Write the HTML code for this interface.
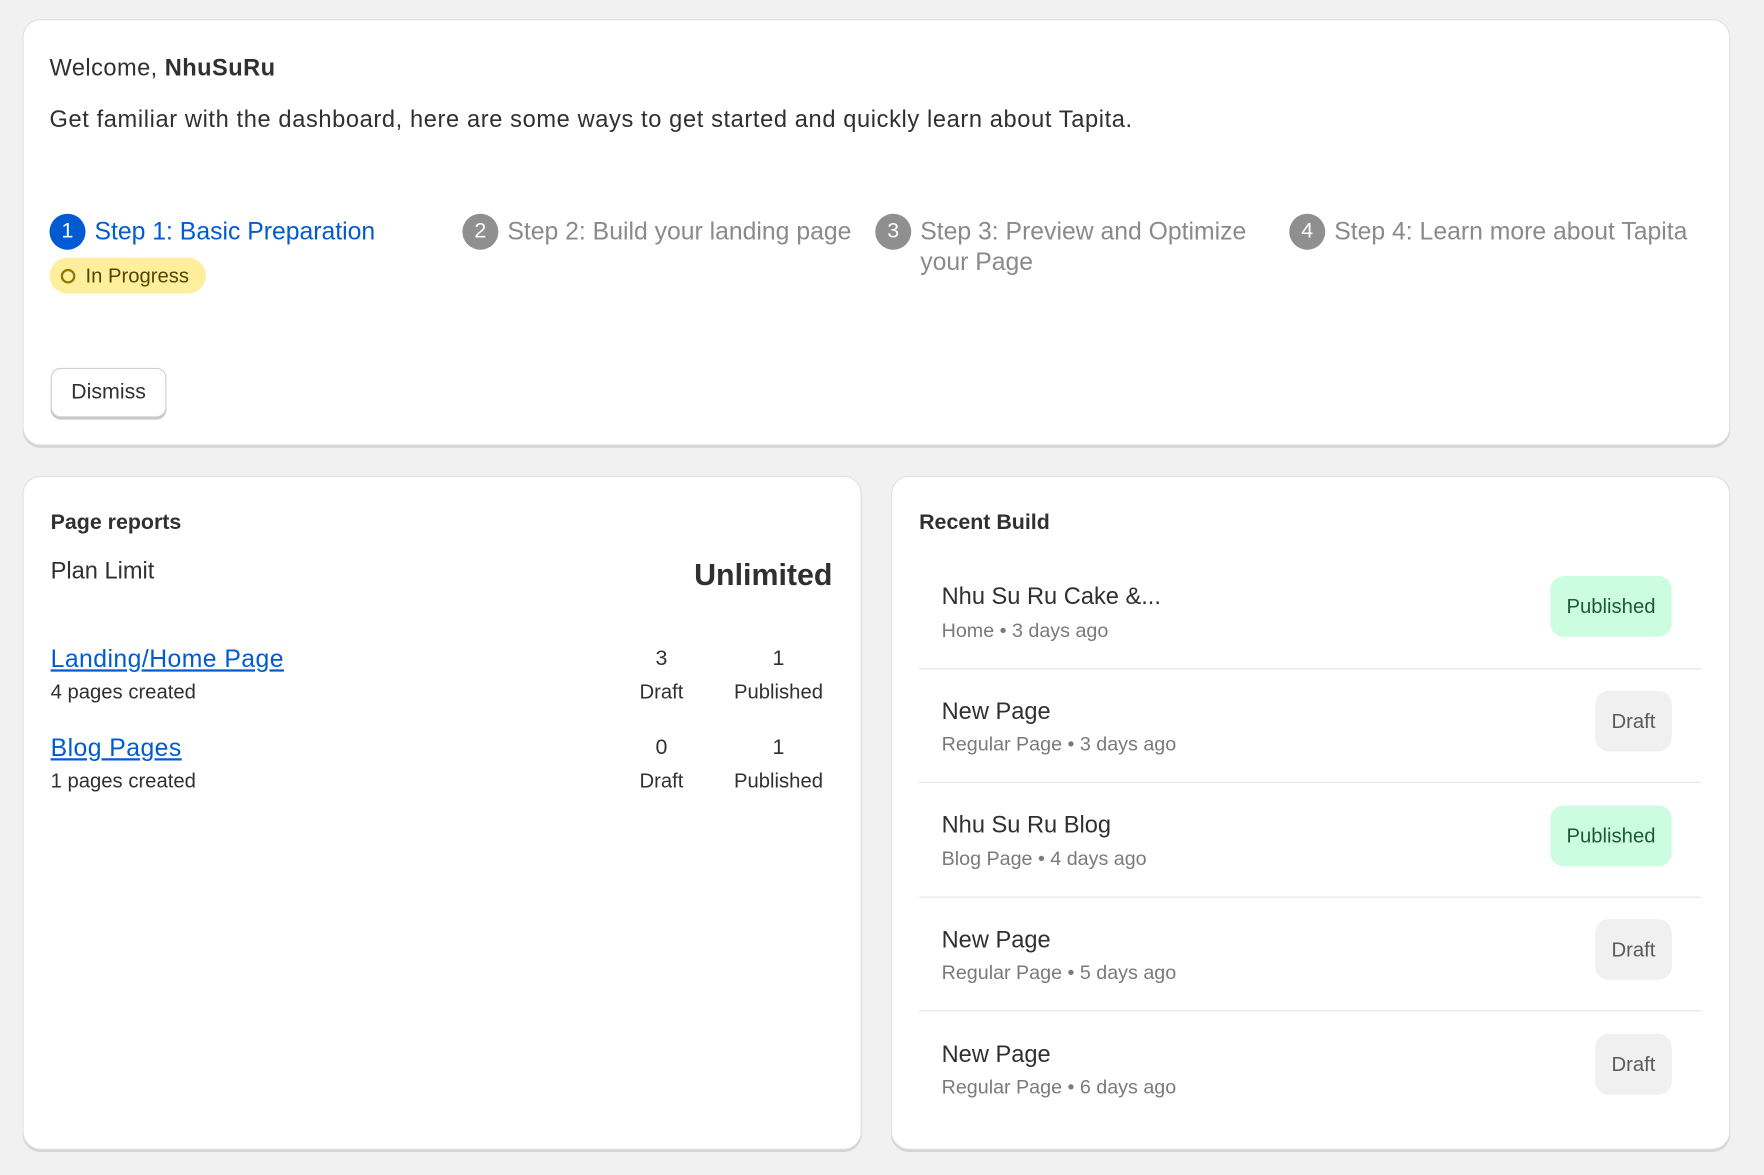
<!DOCTYPE html>
<html><head><meta charset="utf-8"><style>
html,body{margin:0;padding:0;background:#f1f1f1;width:1764px;height:1175px;overflow:hidden}
#w{position:absolute;left:0;top:0;width:1568px;height:1044px;transform:scale(1.125);transform-origin:0 0;font-family:"Liberation Sans",sans-serif;color:#303030}
.card{position:absolute;background:#fff;border:1px solid #e1e1e1;border-radius:16px;box-shadow:0 2px 0 #d4d4d4}
.a{position:absolute;white-space:nowrap;line-height:1}
.c{position:absolute;width:32px;height:32px;border-radius:50%;color:#fff;font-size:19px;text-align:center;line-height:32px}
.st{font-size:22px;color:#8a8a8a}
.sep{position:absolute;left:817px;width:695px;height:1px;background:#e3e3e3}
.t{font-size:21px;color:#303030}
.s{font-size:17.5px;color:#7a7a7a}
.pub{position:absolute;left:1378px;width:108px;height:54px;background:#cdfde0;border-radius:12px;color:#1c5a35;font-size:18px;text-align:center;line-height:54px}
.dr{position:absolute;left:1418px;width:68px;height:54px;background:#f0f0f0;border-radius:12px;color:#5a5a5a;font-size:18px;text-align:center;line-height:54px}
.n{position:absolute;width:100px;text-align:center;font-size:19px;line-height:1}
.lk{color:#005bd3;text-decoration:underline;font-size:22px;letter-spacing:0.4px}
</style></head><body><div id="w">
<div class="card" style="left:20px;top:17px;width:1516px;height:377px"></div>
<div class="a" style="left:44px;top:50px;font-size:21px;letter-spacing:0.4px">Welcome, <b>NhuSuRu</b></div>
<div class="a" style="left:44px;top:96px;font-size:21px;letter-spacing:0.55px">Get familiar with the dashboard, here are some ways to get started and quickly learn about Tapita.</div>
<div class="c" style="left:44px;top:190px;background:#005bd3">1</div>
<div class="a st" style="left:84px;top:195px;color:#005bd3">Step 1: Basic Preparation</div>
<div class="c" style="left:411px;top:190px;background:#8f8f8f">2</div>
<div class="a st" style="left:451px;top:195px">Step 2: Build your landing page</div>
<div class="c" style="left:778px;top:190px;background:#8f8f8f">3</div>
<div class="a st" style="left:818px;line-height:27px;top:192px">Step 3: Preview and Optimize<br>your Page</div>
<div class="c" style="left:1146px;top:190px;background:#8f8f8f">4</div>
<div class="a st" style="left:1186px;top:195px">Step 4: Learn more about Tapita</div>
<div style="position:absolute;left:44px;top:229px;width:139px;height:32px;background:#ffef9d;border-radius:16px"></div>
<div style="position:absolute;left:54px;top:239px;width:9px;height:9px;border:2px solid #8a7a00;border-radius:50%"></div>
<div class="a" style="left:76px;top:236px;font-size:18px;color:#4f4700">In Progress</div>
<div style="position:absolute;left:45px;top:327px;width:101px;height:42px;border:1px solid #cfcfcf;border-radius:9px;box-shadow:0 2px 0 #c8c8c8;background:#fff;font-size:19px;text-align:center;line-height:42px;color:#303030">Dismiss</div>

<div class="card" style="left:20px;top:423px;width:744px;height:597px"></div>
<div class="a" style="left:45px;top:455px;font-size:19px;font-weight:bold">Page reports</div>
<div class="a" style="left:45px;top:497px;font-size:21px">Plan Limit</div>
<div class="a" style="right:828px;top:498px;font-size:27px;font-weight:bold;color:#303030">Unlimited</div>
<div class="a lk" style="left:45px;top:575px">Landing/Home Page</div>
<div class="a" style="left:45px;top:606px;font-size:18px">4 pages created</div>
<div class="n" style="left:538px;top:576px">3</div><div class="n" style="left:538px;top:606px;font-size:18px">Draft</div>
<div class="n" style="left:642px;top:576px">1</div><div class="n" style="left:642px;top:606px;font-size:18px">Published</div>
<div class="a lk" style="left:45px;top:654px">Blog Pages</div>
<div class="a" style="left:45px;top:685px;font-size:18px">1 pages created</div>
<div class="n" style="left:538px;top:655px">0</div><div class="n" style="left:538px;top:685px;font-size:18px">Draft</div>
<div class="n" style="left:642px;top:655px">1</div><div class="n" style="left:642px;top:685px;font-size:18px">Published</div>

<div class="card" style="left:792px;top:423px;width:744px;height:597px"></div>
<div class="a" style="left:817px;top:455px;font-size:19px;font-weight:bold">Recent Build</div>

<div class="a t" style="left:837px;top:520px">Nhu Su Ru Cake &amp;...</div>
<div class="a s" style="left:837px;top:552px">Home • 3 days ago</div>
<div class="pub" style="top:512px">Published</div>
<div class="sep" style="top:594px"></div>

<div class="a t" style="left:837px;top:622px">New Page</div>
<div class="a s" style="left:837px;top:653px">Regular Page • 3 days ago</div>
<div class="dr" style="top:614px">Draft</div>
<div class="sep" style="top:695px"></div>

<div class="a t" style="left:837px;top:723px">Nhu Su Ru Blog</div>
<div class="a s" style="left:837px;top:755px">Blog Page • 4 days ago</div>
<div class="pub" style="top:716px">Published</div>
<div class="sep" style="top:797px"></div>

<div class="a t" style="left:837px;top:825px">New Page</div>
<div class="a s" style="left:837px;top:856px">Regular Page • 5 days ago</div>
<div class="dr" style="top:817px">Draft</div>
<div class="sep" style="top:898px"></div>

<div class="a t" style="left:837px;top:927px">New Page</div>
<div class="a s" style="left:837px;top:958px">Regular Page • 6 days ago</div>
<div class="dr" style="top:919px">Draft</div>
</div></body></html>
